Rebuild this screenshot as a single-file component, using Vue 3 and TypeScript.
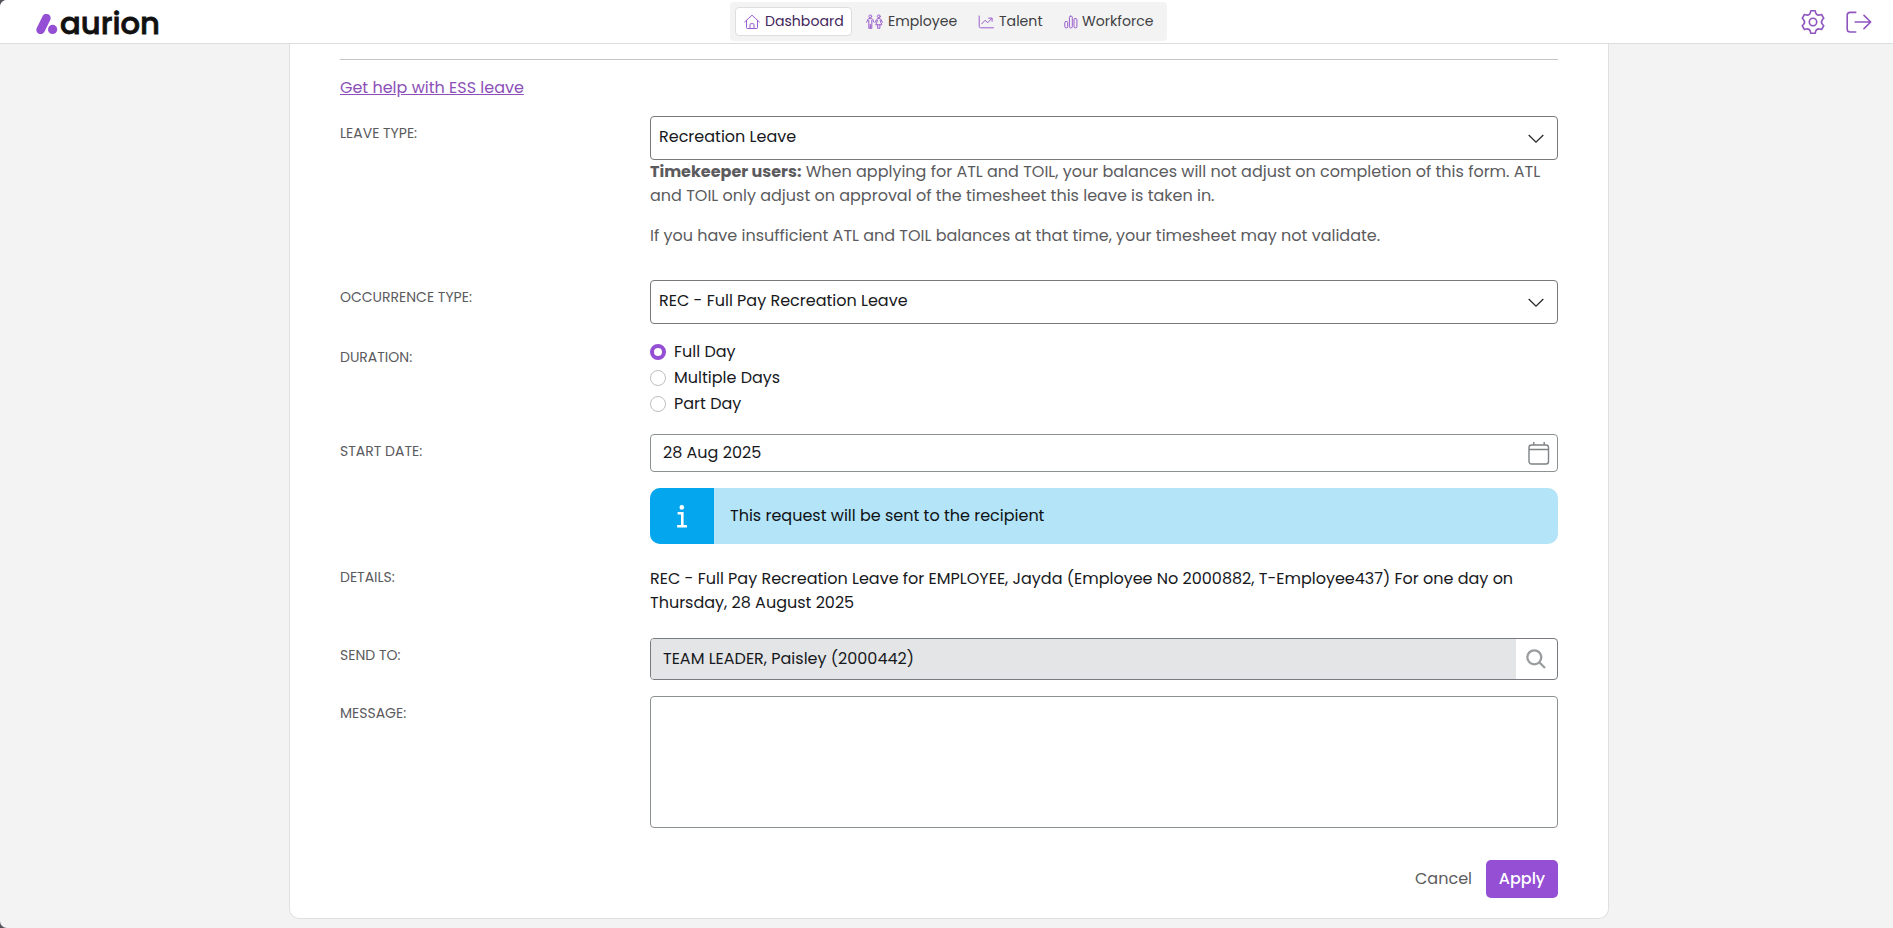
<script setup lang="ts">
import { ref } from 'vue'

type NavId = 'dashboard' | 'employee' | 'talent' | 'workforce'

const nav: { id: NavId; label: string }[] = [
  { id: 'dashboard', label: 'Dashboard' },
  { id: 'employee', label: 'Employee' },
  { id: 'talent', label: 'Talent' },
  { id: 'workforce', label: 'Workforce' },
]
const active = ref<NavId>('dashboard')

const durations: { id: string; label: string }[] = [
  { id: 'full', label: 'Full Day' },
  { id: 'multiple', label: 'Multiple Days' },
  { id: 'part', label: 'Part Day' },
]
const duration = ref('full')

// Six-toothed cog outline around the origin
function cogPath(teeth: number, outer: number, inner: number): string {
  const pt = (deg: number, r: number) => {
    const a = ((deg - 90) * Math.PI) / 180
    return `${(Math.cos(a) * r).toFixed(2)} ${(Math.sin(a) * r).toFixed(2)}`
  }
  const step = 360 / teeth
  let d = ''
  for (let i = 0; i < teeth; i++) {
    const a = i * step
    d += `${i ? 'L' : 'M'}${pt(a - 11, outer)}L${pt(a + 11, outer)}`
    d += `Q${pt(a + 14, outer - 1)} ${pt(a + 16, inner + 0.7)}`
    d += `Q${pt(a + step / 2, inner - 1.6)} ${pt(a + step - 16, inner + 0.7)}`
    d += `Q${pt(a + step - 14, outer - 1)} ${pt(a + step - 11, outer)}`
  }
  return d + 'Z'
}
const cog = cogPath(6, 11.4, 9)
</script>

<template>
  <div class="window">
    <header class="topbar">
      <svg class="logo" width="130" height="40" viewBox="0 0 130 40" role="img" aria-label="aurion">
        <line x1="16.4" y1="18.2" x2="10.6" y2="29.8" class="logo-bar" />
        <circle cx="22.6" cy="29.4" r="4.6" class="logo-dot" />
        <text x="30" y="33.5" class="logo-text" textLength="100" lengthAdjust="spacingAndGlyphs">aurion</text>
      </svg>

      <nav class="tabs">
        <a v-for="item in nav" :key="item.id" class="tab" :class="[item.id, { active: item.id === active }]" @click="active = item.id">
          <svg v-if="item.id === 'dashboard'" class="tab-icon" width="16" height="16" viewBox="0 0 16 16">
            <path d="M.6 8 8 1.2 15.4 8M2.5 6.5v7q0 1 1 1h9q1 0 1-1v-7M6 14.5v-4q0-.8.8-.8h2.4q.8 0 .8.8v4" />
          </svg>
          <svg v-else-if="item.id === 'employee'" class="tab-icon" width="17" height="16" viewBox="0 0 17 16">
            <circle cx="4.3" cy="2.3" r="1.4" />
            <circle cx="12.8" cy="2.3" r="1.4" />
            <path d="M.7 8.2 2 5.2q.3-.6 1-.6h2.6q.7 0 1 .6l1.3 3M2.8 6.3v8h1.5v-4 4h1.5v-8M9.2 8.2l1.6-3q.3-.6 1-.6h2q.7 0 1 .6l1.6 3M11.5 6.3 9.8 10.8h6L14.1 6.3M11.7 10.8v3.5h2.2v-3.5" />
          </svg>
          <svg v-else-if="item.id === 'talent'" class="tab-icon" width="16" height="16" viewBox="0 0 16 16">
            <path d="M1.2 2v10.3q0 1.5 1.5 1.5h12.8M3.8 9.8l3.4-3.6 2.4 2.6 4.2-4.4M10.6 4.1h3.5v3.2" />
          </svg>
          <svg v-else class="tab-icon" width="14" height="16" viewBox="0 0 14 16">
            <rect x=".8" y="7.5" width="2.9" height="6.3" rx="1" />
            <rect x="5.4" y="2.2" width="2.9" height="11.6" rx="1" />
            <rect x="10" y="4.6" width="2.9" height="9.2" rx="1" />
          </svg>
          <span class="tab-label">{{ item.label }}</span>
        </a>
      </nav>

      <div class="tools">
        <svg width="26" height="26" viewBox="-13 -13 26 26" class="tool">
          <path :d="cog" />
          <circle r="3.7" />
        </svg>
        <svg width="26" height="26" viewBox="0 0 26 26" class="tool">
          <path d="M9.7 3.4H4.2Q1.2 3.4 1.2 6.2v14q0 2.8 3 2.8h5.5M9.2 13h15.3M18 6.4 24.7 13 18 19.6" />
        </svg>
      </div>
    </header>

    <main class="card">
      <hr class="rule" />
      <a class="help-link">Get help with ESS leave</a>

      <form class="form" @submit.prevent>
        <section class="row">
          <label class="label">LEAVE TYPE:</label>
          <div>
            <div class="select">
              <span>Recreation Leave</span>
              <svg class="chevron" width="16" height="10" viewBox="0 0 16 10"><path d="M.7 1 8 8.2 15.3 1" /></svg>
            </div>
            <p class="note"><strong>Timekeeper users:</strong> When applying for ATL and TOIL, your balances will not adjust on completion of this form. ATL and TOIL only adjust on approval of the timesheet this leave is taken in.</p>
            <p class="note">If you have insufficient ATL and TOIL balances at that time, your timesheet may not validate.</p>
          </div>
        </section>

        <section class="row occurrence">
          <label class="label">OCCURRENCE TYPE:</label>
          <div class="select">
            <span>REC - Full Pay Recreation Leave</span>
            <svg class="chevron" width="16" height="10" viewBox="0 0 16 10"><path d="M.7 1 8 8.2 15.3 1" /></svg>
          </div>
        </section>

        <section class="row duration">
          <label class="label">DURATION:</label>
          <div>
            <div v-for="d in durations" :key="d.id" class="radio" @click="duration = d.id">
              <span class="dot" :class="{ on: duration === d.id }"></span>
              <span>{{ d.label }}</span>
            </div>
          </div>
        </section>

        <section class="row start">
          <label class="label">START DATE:</label>
          <div>
            <div class="date">
              <span>28 Aug 2025</span>
              <svg class="calendar" width="22" height="24" viewBox="0 0 22 24">
                <rect x="1" y="4" width="19.5" height="19" rx="2.5" />
                <path d="M1 8.5h19.5M5.8 1v3M16.2 1v3" />
              </svg>
            </div>
            <div class="alert">
              <div class="alert-icon">
                <svg width="12" height="23" viewBox="0 0 12 23">
                  <circle cx="5.8" cy="2.4" r="2.3" />
                  <path d="M1.6 8.2h4.7v13M1.1 21.2h9.8" />
                </svg>
              </div>
              <span class="alert-text">This request will be sent to the recipient</span>
            </div>
          </div>
        </section>

        <section class="row details">
          <label class="label">DETAILS:</label>
          <p class="summary">REC - Full Pay Recreation Leave for EMPLOYEE, Jayda (Employee No 2000882, T-Employee437) For one day on Thursday, 28 August 2025</p>
        </section>

        <section class="row send">
          <label class="label">SEND TO:</label>
          <div class="lookup">
            <span class="lookup-value">TEAM LEADER, Paisley (2000442)</span>
            <span class="lookup-button">
              <svg width="20" height="20" viewBox="0 0 20 20">
                <circle cx="8.3" cy="8.3" r="7" />
                <path d="m13.3 13.3 5.7 5.7" />
              </svg>
            </span>
          </div>
        </section>

        <section class="row message">
          <label class="label">MESSAGE:</label>
          <div class="textarea"></div>
        </section>

        <div class="actions">
          <button type="button" class="cancel">Cancel</button>
          <button type="submit" class="apply">Apply</button>
        </div>
      </form>
    </main>
  </div>
</template>

<style>
html,
body {
  margin: 0;
  background: #55535a;
  overflow: hidden;
}
</style>

<style scoped>
.window {
  height: 928px;
  background: #f3f3f3;
  border-radius: 7px 0 0 7px;
  overflow: hidden;
  font: 400 16px/24px Poppins, Inter, sans-serif;
  color: #17191d;
}
.window * {
  box-sizing: border-box;
}
.topbar {
  height: 44px;
  display: grid;
  grid-template-columns: 730px 437px 1fr;
  align-items: start;
  background: #fff;
  border-bottom: 1px solid #dbdfdf;
}
.logo {
  margin-left: 30px;
  overflow: visible;
}
.logo-bar {
  stroke: #944fd4;
  stroke-width: 8.6;
  stroke-linecap: round;
}
.logo-dot {
  fill: #944fd4;
}
.logo-text {
  font-family: Poppins, Inter, sans-serif;
  font-size: 31px;
  font-weight: 500;
  fill: #111;
  stroke: #111;
  stroke-width: 0.8;
}
.tabs {
  height: 39px;
  margin-top: 2px;
  padding: 5px;
  display: flex;
  background: #f3f3f3;
  border-radius: 4px;
}
.tab {
  height: 29px;
  display: flex;
  align-items: center;
  gap: 5px;
  padding: 0 8px;
  border: 1px solid transparent;
  border-radius: 4px;
  color: #3f3f44;
  font-size: 14.1px;
  line-height: 20px;
  white-space: nowrap;
}
.tab.active {
  background: #fff;
  border-color: #dbdfdf;
  color: #43275c;
}
.tab-label {
  padding-bottom: 1px;
}
.tab-icon {
  flex: none;
  fill: none;
  stroke: #9a5fce;
  stroke-width: 1;
  stroke-linecap: round;
  stroke-linejoin: round;
}
.dashboard {
  width: 117px;
}
.employee {
  width: 114px;
  padding-left: 13px;
}
.talent {
  width: 84px;
  padding-left: 11px;
}
.workforce {
  padding-left: 13px;
  gap: 4px;
}
.tools {
  display: flex;
  justify-content: flex-end;
  gap: 20px;
  padding: 9px 21px 0 0;
}
.tool {
  fill: none;
  stroke: #8f55bf;
  stroke-width: 1.6;
  stroke-linecap: round;
  stroke-linejoin: round;
}
.card {
  width: 1320px;
  height: 875px;
  margin-left: 289px;
  padding: 15px 50px 0;
  background: #fff;
  border: 1px solid #dfe1e1;
  border-top: 0;
  border-radius: 0 0 10px 10px;
}
.rule {
  height: 1px;
  margin: 0;
  border: 0;
  background: #c4c4c6;
}
.help-link {
  display: block;
  width: max-content;
  height: 40px;
  margin-top: 16px;
  color: #8c50b8;
  text-decoration: underline;
}
.row {
  display: grid;
  grid-template-columns: 310px 908px;
}
.label {
  padding-top: 7px;
  font-size: 14px;
  line-height: 21px;
  color: #5b5b5e;
}
.select {
  height: 44px;
  display: flex;
  align-items: center;
  justify-content: space-between;
  padding: 0 13px 2px 8px;
  border: 1px solid #77797b;
  border-radius: 4px;
}
.chevron {
  margin-top: 4px;
  fill: none;
  stroke: #26282b;
  stroke-width: 1.3;
}
.note {
  margin: 0;
  color: #5b5b5e;
}
.note + .note {
  margin-top: 16px;
}
.occurrence {
  margin-top: 32px;
}
.duration {
  margin-top: 15px;
}
.duration .label {
  padding-top: 8px;
}
.start {
  margin-top: 17px;
}
.details {
  margin-top: 23px;
}
.details .label {
  padding-top: 0;
}
.send {
  margin-top: 23px;
}
.message {
  margin-top: 16px;
}
.radio {
  height: 26px;
  display: flex;
  align-items: center;
  gap: 8px;
}
.dot {
  width: 16px;
  height: 16px;
  border: 1px solid #bfbfc2;
  border-radius: 50%;
}
.dot.on {
  border: 4.5px solid #944fd4;
}
.date {
  height: 38px;
  display: flex;
  align-items: center;
  justify-content: space-between;
  padding: 0 7px 0 12px;
  border: 1px solid #8c9192;
  border-radius: 4px;
}
.calendar {
  fill: none;
  stroke: #7f8385;
  stroke-width: 1.4;
}
.alert {
  height: 56px;
  margin-top: 16px;
  display: flex;
  background: #b4e4f8;
  border-radius: 10px;
  overflow: hidden;
}
.alert-icon {
  width: 64px;
  display: grid;
  place-items: center;
  background: #04a7ee;
}
.alert-icon circle {
  fill: #fff;
}
.alert-icon path {
  fill: none;
  stroke: #fff;
  stroke-width: 2.6;
}
.alert-text {
  padding: 16px 0 0 16px;
  color: #0d1216;
}
.summary {
  margin: 0;
}
.lookup {
  height: 42px;
  display: flex;
  border: 1px solid #777b80;
  border-radius: 4px;
  overflow: hidden;
}
.lookup-value {
  flex: 1;
  padding: 8px 0 0 12px;
  background: #e4e5e7;
}
.lookup-button {
  width: 41px;
  padding: 10px 0 0 10px;
}
.lookup-button svg {
  display: block;
  fill: none;
  stroke: #9a9da0;
  stroke-width: 2.3;
}
.textarea {
  height: 132px;
  border: 1px solid #8c9192;
  border-radius: 4px;
}
.actions {
  display: flex;
  justify-content: flex-end;
  gap: 14px;
  margin-top: 32px;
}
.actions button {
  height: 38px;
  padding: 0;
  border: 0;
  font: inherit;
}
.actions .cancel {
  background: none;
  color: #5b5b5e;
}
.actions .apply {
  width: 72px;
  border-radius: 5px;
  background: #944fd4;
  color: #fff;
  font-weight: 500;
}
</style>
